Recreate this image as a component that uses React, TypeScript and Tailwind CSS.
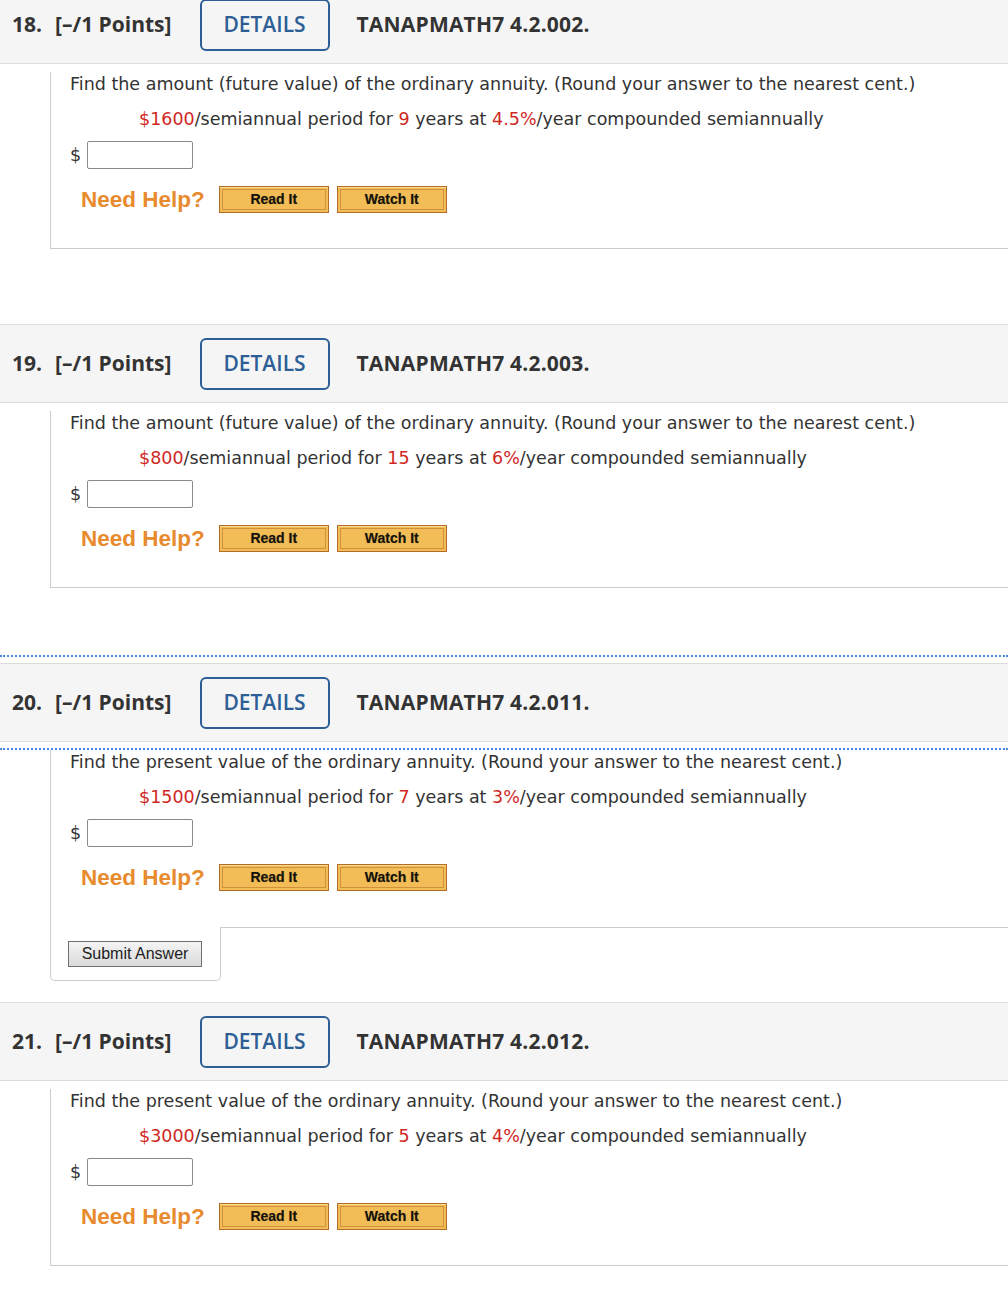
import React from "react";

type Question = {
    num: number;
    code: string;
    prompt: string;
    payment: string;
    years: string;
    rate: string;
    submit?: boolean;
    focused?: boolean;
};

const questions: Question[] = [
    { num: 18, code: "TANAPMATH7 4.2.002.", prompt: "Find the amount (future value) of the ordinary annuity. (Round your answer to the nearest cent.)", payment: "$1600", years: "9", rate: "4.5%" },
    { num: 19, code: "TANAPMATH7 4.2.003.", prompt: "Find the amount (future value) of the ordinary annuity. (Round your answer to the nearest cent.)", payment: "$800", years: "15", rate: "6%" },
    { num: 20, code: "TANAPMATH7 4.2.011.", prompt: "Find the present value of the ordinary annuity. (Round your answer to the nearest cent.)", payment: "$1500", years: "7", rate: "3%", submit: true, focused: true },
    { num: 21, code: "TANAPMATH7 4.2.012.", prompt: "Find the present value of the ordinary annuity. (Round your answer to the nearest cent.)", payment: "$3000", years: "5", rate: "4%" },
];

function HelpButton({ label }: { label: string }) {
    return (
        <button className="w-[110px] h-[27px] border border-[#b56c26] bg-[#f2bd56] p-[2px] shadow-[inset_0_1px_0_#fbd98f]">
            <span className="flex items-center justify-center w-full h-full border border-[#d0913a] text-[14px] font-bold text-[#15120c] font-['Liberation_Sans',Arial,sans-serif] [text-shadow:0_0_1px_rgba(0,0,0,0.35)]">
                {label}
            </span>
        </button>
    );
}

function QuestionBlock({ q }: { q: Question }) {
    return (
        <div className={q.submit ? "mb-[21px]" : "mb-[75px]"}>
            {/* Header */}
            <div className="relative">
                <div className="h-[79px] bg-[#f5f5f5] border-y border-[#dcdcdc] flex items-center pl-3 font-['Open_Sans',sans-serif] text-[21px] text-[#333]">
                    <span className="font-bold w-[43px]">{q.num}.</span>
                    <span className="font-bold">[–/1 Points]</span>
                    <span className="ml-[28px] w-[130px] h-[52px] border-2 border-[#2d5f96] rounded-md flex items-center justify-center text-[#2d5f96] font-semibold">
                        DETAILS
                    </span>
                    <span className="ml-[27px] font-bold tracking-[0.2px]">{q.code}</span>
                </div>
                {q.focused && (
                    <div className="absolute left-0 right-0 top-[-8px] bottom-[-8px] border-y-2 border-dotted border-[#4a8ae0] pointer-events-none" />
                )}
            </div>

            {/* Body */}
            <div className={"ml-[50px] border-l border-[#cccccc] pl-[19px] text-[#333] font-['DejaVu_Sans',Verdana,sans-serif] text-[17.5px] " + (q.submit ? "pb-[36px]" : "border-b pb-[35px]")}>
                <div className="h-[24px] mt-[8px] leading-[24px] whitespace-nowrap">{q.prompt}</div>
                <div className="h-[24px] mt-[11px] leading-[24px] pl-[69px] whitespace-nowrap">
                    <span className="text-[#d0281f]">{q.payment}</span>/semiannual period for{" "}
                    <span className="text-[#d0281f]">{q.years}</span> years at{" "}
                    <span className="text-[#d0281f]">{q.rate}</span>/year compounded semiannually
                </div>
                <div className="h-[28px] mt-[10px] flex items-center">
                    <span className="w-[17px]">$</span>
                    <input type="text" className="w-[106px] h-[28px] border border-[#8a8a8a] rounded-[2px] bg-white outline-none" />
                </div>
                <div className="h-[27px] mt-[17px] flex items-center pl-[11px]">
                    <span className="text-[22.5px] font-bold text-[#e88a2e] font-['Liberation_Sans',Arial,sans-serif] mr-[14px]">Need Help?</span>
                    <HelpButton label="Read It" />
                    <span className="w-[8px]" />
                    <HelpButton label="Watch It" />
                </div>
            </div>

            {q.submit && (
                <div className="flex">
                    <div className="ml-[50px] w-[171px] h-[54px] border-x border-b border-[#cccccc] rounded-b-[5px] pl-[17px] pt-[14px]">
                        <button className="w-[134px] h-[26px] border border-[#6f6f6f] bg-gradient-to-b from-[#f4f4f4] to-[#dadada] text-[16px] text-[#222] font-['Liberation_Sans',Arial,sans-serif] leading-none">
                            Submit Answer
                        </button>
                    </div>
                    <div className="flex-1 border-t border-[#cccccc]" />
                </div>
            )}
        </div>
    );
}

export default function App() {
    return (
        <div className="w-[1008px] bg-white overflow-hidden">
            <div className="mt-[-15px]">
                {questions.map((q) => (
                    <QuestionBlock key={q.num} q={q} />
                ))}
            </div>
        </div>
    );
}
